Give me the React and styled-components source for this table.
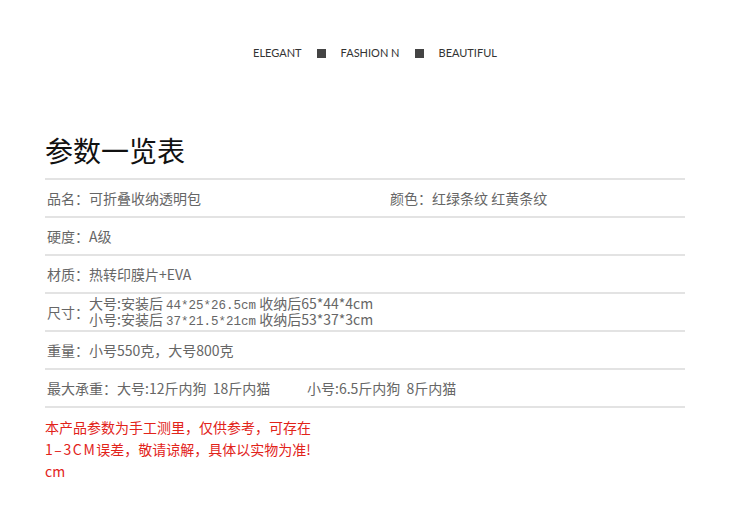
import React from "react";
import styled, { createGlobalStyle } from "styled-components";

const GlobalStyle = createGlobalStyle`
  body {
    margin: 0;
    background: #ffffff;
    font-family: "Noto Sans CJK SC", "Noto Sans", sans-serif;
  }
`;

const Page = styled.div`
  width: 750px;
  height: 509px;
  overflow: hidden;
`;

const Header = styled.div`
  display: flex;
  justify-content: center;
  align-items: center;
  gap: 14px;
  padding-top: 46px;
  font-family: "Lato", "Open Sans", sans-serif;
  font-size: 11px;
  line-height: 14px;
  color: #333;
`;

const Square = styled.span`
  width: 9px;
  height: 9px;
  background: #444;
  margin: 0 1px;
`;

const Content = styled.div`
  padding: 0 65px 0 45px;
`;

const Title = styled.h1`
  margin: 70px 0 8px 0;
  font-size: 28px;
  line-height: 40px;
  font-weight: 400;
  color: #111;
`;

const Table = styled.div`
  border-bottom: 2px solid #e3e3e3;
`;

const Row = styled.div`
  display: flex;
  align-items: center;
  height: 36px;
  border-top: 2px solid #e3e3e3;
  padding-left: 2px;
  font-size: 14px;
  color: #666;
`;

const Cell = styled.div`
  width: ${(p) => p.$width || "auto"};
  white-space: pre;
`;

const Label = styled.span`
  white-space: nowrap;
`;

const Lines = styled.div`
  display: flex;
  flex-direction: column;
  margin-top: -3px;
`;

const Line = styled.div`
  height: 16px;
  line-height: 16px;
  white-space: nowrap;
`;

const Mono = styled.span`
  font-family: "Liberation Mono", monospace;
  font-size: 12.5px;
  line-height: 0;
`;

const Note = styled.div`
  margin-top: 8px;
  font-size: 14px;
  line-height: 22px;
  color: #e2231a;
`;

const Wide = styled.span`
  letter-spacing: 1.6px;
`;

export default function App() {
  return (
    <Page>
      <GlobalStyle />
      <Header>
        <span>ELEGANT</span>
        <Square />
        <span>FASHION N</span>
        <Square />
        <span>BEAUTIFUL</span>
      </Header>
      <Content>
        <Title>参数一览表</Title>
        <Table>
          <Row>
            <Cell $width="343px">品名：可折叠收纳透明包</Cell>
            <Cell>颜色：红绿条纹 红黄条纹</Cell>
          </Row>
          <Row>
            <Cell>硬度：A级</Cell>
          </Row>
          <Row>
            <Cell>材质：热转印膜片+EVA</Cell>
          </Row>
          <Row>
            <Label>尺寸：</Label>
            <Lines>
              <Line>
                大号:安装后 <Mono>44*25*26.5cm</Mono> 收纳后65*44*4cm
              </Line>
              <Line>
                小号:安装后 <Mono>37*21.5*21cm</Mono> 收纳后53*37*3cm
              </Line>
            </Lines>
          </Row>
          <Row>
            <Cell>重量：小号550克，大号800克</Cell>
          </Row>
          <Row>
            <Cell $width="260px">最大承重：大号:12斤内狗  18斤内猫</Cell>
            <Cell>小号:6.5斤内狗  8斤内猫</Cell>
          </Row>
        </Table>
        <Note>
          本产品参数为手工测里，仅供参考，可存在
          <br />
          <Wide>1–3CM</Wide>误差，敬请谅解，具体以实物为准!
          <br />
          cm
        </Note>
      </Content>
    </Page>
  );
}
